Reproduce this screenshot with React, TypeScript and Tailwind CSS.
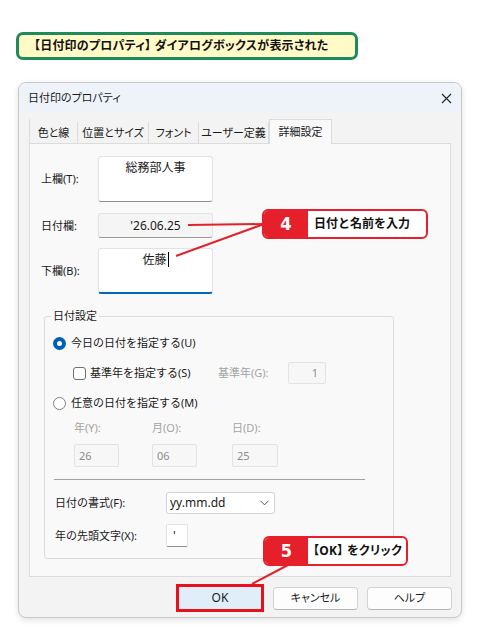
import React from "react";

function Radio({ checked }: { checked?: boolean }) {
  if (checked) {
    return (
      <span className="w-[13px] h-[13px] rounded-full bg-[#005fb8] flex items-center justify-center shrink-0">
        <span className="w-[5px] h-[5px] rounded-full bg-white" />
      </span>
    );
  }
  return <span className="w-[13px] h-[13px] rounded-full border border-[#808080] bg-white shrink-0" />;
}

function Tab({ label, w, active }: { label: string; w: string; active?: boolean }) {
  if (active) {
    return (
      <div
        className={`${w} h-[25px] -mb-px relative z-10 bg-[#f9f9f9] border border-b-0 border-[#dcdcdc] flex items-center justify-center text-[11px] leading-[14px] text-[#1a1a1a] [font-feature-settings:'palt']`}
      >
        {label}
      </div>
    );
  }
  return (
    <div
      className={`${w} h-[21px] border-r border-[#dcdcdc] flex items-center justify-center text-[11px] leading-[14px] text-[#1a1a1a] [font-feature-settings:'palt']`}
    >
      {label}
    </div>
  );
}

export default function App() {
  return (
    <div className="w-[480px] h-[640px] bg-white relative overflow-hidden pt-[32px] font-['Noto_Sans','Noto_Sans_CJK_JP',sans-serif] text-[#1a1a1a]">
      {/* Banner */}
      <div className="ml-[16px] w-[342px] h-[28px] border-[3px] border-[#1f8a5b] rounded-[7px] bg-[#fffac6] flex items-center pl-[15px] text-[12px] leading-[14px] font-bold text-[#111] whitespace-nowrap [font-feature-settings:'palt'] tracking-[0.2px]">
        【日付印のプロパティ】 ダイアログボックスが表示された
      </div>

      {/* Dialog */}
      <div className="mt-[22px] ml-[18px] w-[444px] h-[536px] rounded-[8px] border border-[#c9c9c9] bg-[#f3f3f3] shadow-[0_2px_6px_rgba(0,0,0,0.12)] flex flex-col overflow-hidden">
        {/* Title bar */}
        <div className="h-[30px] shrink-0 bg-[#eef3f9] flex items-center justify-between pl-[9px] pr-[9px]">
          <span className="text-[11px] leading-[14px] [font-feature-settings:'palt']">日付印のプロパティ</span>
          <svg width="11" height="11" viewBox="0 0 11 11">
            <path d="M1 1 L10 10 M10 1 L1 10" stroke="#222" strokeWidth="1.1" fill="none" />
          </svg>
        </div>

        {/* Tabs */}
        <div className="h-[30px] shrink-0 flex items-end px-[10px]">
          <div className="flex items-end border-l border-[#dcdcdc]">
            <Tab label="色と線" w="w-[48px]" />
            <Tab label="位置とサイズ" w="w-[71px]" />
            <Tab label="フォント" w="w-[50px]" />
            <Tab label="ユーザー定義" w="w-[70px]" />
            <Tab label="詳細設定" w="w-[63px]" active />
          </div>
        </div>

        {/* Panel */}
        <div className="mx-[10px] h-[434px] shrink-0 border border-[#dcdcdc] bg-[#f9f9f9] pt-[12px] text-[11px] leading-[14px]">
          {/* 上欄 */}
          <div className="flex items-center h-[46px]">
            <div className="w-[68px] pl-[11px]">上欄(T):</div>
            <div className="w-[115px] h-[46px] bg-white border border-[#e3e3e3] border-b-[#8f8f8f] rounded-[3px] flex justify-center pt-[4px] text-[12px] leading-[14px]">
              総務部人事
            </div>
          </div>
          {/* 日付欄 */}
          <div className="flex items-center h-[25px] mt-[11px]">
            <div className="w-[68px] pl-[11px]">日付欄:</div>
            <div className="w-[115px] h-[25px] bg-[#f5f5f5] border border-[#e3e3e3] border-b-[#9a9a9a] rounded-[3px] flex items-center justify-center text-[12px] leading-[14px]">
              '26.06.25
            </div>
          </div>
          {/* 下欄 */}
          <div className="flex items-center h-[46px] mt-[10px]">
            <div className="w-[68px] pl-[11px]">下欄(B):</div>
            <div className="w-[115px] h-[46px] bg-white border border-[#e3e3e3] border-b-2 border-b-[#0067c0] rounded-[3px] flex justify-center items-start pt-[3px] text-[12px] leading-[14px]">
              <span className="flex items-center">
                佐藤
                <span className="inline-block w-px h-[15px] bg-black ml-[1px]" />
              </span>
            </div>
          </div>

          {/* Group box */}
          <div className="mt-[22px] ml-[14px] w-[350px] border border-[#dcdcdc] rounded-[3px] pb-[11px]">
            <div className="-mt-[8px] ml-[6px] w-fit px-[2px] bg-[#f9f9f9] leading-[14px]">日付設定</div>

            <div className="mt-[12px] h-[16px] flex items-center pl-[8px] gap-[5px]">
              <Radio checked />
              <span>今日の日付を指定する(U)</span>
            </div>

            <div className="mt-[11px] h-[22px] flex items-center pl-[28px]">
              <span className="w-[145px] flex items-center gap-[4px]">
                <span className="w-[13px] h-[13px] rounded-[3px] border border-[#6f6f6f] bg-white shrink-0" />
                <span>基準年を指定する(S)</span>
              </span>
              <span className="w-[70px] text-[#a3a3a3]">基準年(G):</span>
              <span className="w-[38px] h-[22px] border border-[#e3e3e3] bg-[#f7f7f7] rounded-[2px] flex items-center justify-end pr-[7px] text-[#8c8c8c]">
                1
              </span>
            </div>

            <div className="mt-[11px] h-[16px] flex items-center pl-[8px] gap-[5px]">
              <Radio />
              <span>任意の日付を指定する(M)</span>
            </div>

            <div className="mt-[10px] h-[14px] flex pl-[29px] text-[#a3a3a3]">
              <span className="w-[78px]">年(Y):</span>
              <span className="w-[80px]">月(O):</span>
              <span>日(D):</span>
            </div>

            <div className="mt-[9px] flex pl-[29px] text-[#8c8c8c]">
              <div className="w-[78px]">
                <div className="w-[45px] h-[23px] border border-[#e3e3e3] bg-[#f7f7f7] rounded-[2px] flex items-center pl-[4px]">26</div>
              </div>
              <div className="w-[80px]">
                <div className="w-[45px] h-[23px] border border-[#e3e3e3] bg-[#f7f7f7] rounded-[2px] flex items-center pl-[4px]">06</div>
              </div>
              <div className="w-[46px] h-[23px] border border-[#e3e3e3] bg-[#f7f7f7] rounded-[2px] flex items-center pl-[4px]">25</div>
            </div>

            <div className="mt-[12px] ml-[9px] w-[311px] h-px bg-[#a0a0a0]" />

            <div className="mt-[12px] flex items-center pl-[10px]">
              <span className="w-[111px]">日付の書式(F):</span>
              <div className="w-[109px] h-[22px] bg-white border border-[#d3d3d3] rounded-[3px] flex items-center justify-between pl-[3px] pr-[5px] text-[12px]">
                <span>yy.mm.dd</span>
                <svg width="9" height="6" viewBox="0 0 9 6">
                  <path d="M0.5 0.8 L4.5 4.8 L8.5 0.8" stroke="#555" strokeWidth="1" fill="none" />
                </svg>
              </div>
            </div>

            <div className="mt-[10px] flex items-center pl-[10px]">
              <span className="w-[111px]">年の先頭文字(X):</span>
              <div className="w-[22px] h-[23px] bg-white border border-[#e3e3e3] border-b-[#8f8f8f] rounded-[2px] flex items-center pl-[6px] text-[12px]">
                '
              </div>
            </div>
          </div>
        </div>

        {/* Buttons */}
        <div className="mt-[7px] h-[28px] flex items-center justify-end gap-[9px] pr-[9px]">
          <div className="w-[88px] h-[28px] border-[3px] border-[#e8101a] bg-[#e0eefa] flex items-center justify-center text-[12px] leading-[14px]">
            OK
          </div>
          <div className="w-[85px] h-[23px] bg-[#fdfdfd] border border-[#d3d3d3] border-b-[#b5b5b5] rounded-[4px] flex items-center justify-center text-[11px] leading-[14px] [font-feature-settings:'palt']">
            キャンセル
          </div>
          <div className="w-[85px] h-[23px] bg-[#fdfdfd] border border-[#d3d3d3] border-b-[#b5b5b5] rounded-[4px] flex items-center justify-center text-[11px] leading-[14px] [font-feature-settings:'palt']">
            ヘルプ
          </div>
        </div>
      </div>

      {/* Red connector lines */}
      <svg className="absolute left-0 top-0 pointer-events-none z-20" width="480" height="640" viewBox="0 0 480 640">
        <path d="M188 225 L264 224" stroke="#e5202a" strokeWidth="2" fill="none" />
        <path d="M176 256 L264 224" stroke="#e5202a" strokeWidth="2" fill="none" />
        <path d="M288 565 L252 584" stroke="#e5202a" strokeWidth="2" fill="none" />
      </svg>

      {/* Callout 4 */}
      <div className="absolute left-[262px] top-[209px] w-[166px] h-[30px] z-30 rounded-[6px] border-2 border-[#e5202a] bg-white flex overflow-hidden">
        <div className="w-[44px] bg-[#e5202a] flex items-center justify-center text-white font-bold text-[18px] leading-none font-['DejaVu_Sans_Condensed','Roboto',sans-serif]">
          4
        </div>
        <div className="flex-1 flex items-center pl-[6px] text-[12px] leading-[14px] font-bold text-[#111] whitespace-nowrap">
          日付と名前を入力
        </div>
      </div>

      {/* Callout 5 */}
      <div className="absolute left-[263px] top-[536px] w-[145px] h-[30px] z-30 rounded-[6px] border-2 border-[#e5202a] bg-white flex overflow-hidden">
        <div className="w-[43px] bg-[#e5202a] flex items-center justify-center text-white font-bold text-[18px] leading-none font-['DejaVu_Sans_Condensed','Roboto',sans-serif]">
          5
        </div>
        <div className="flex-1 flex items-center pl-[5px] text-[12px] leading-[14px] font-bold text-[#111] whitespace-nowrap [font-feature-settings:'palt'] tracking-[0.3px]">
          【OK】 をクリック
        </div>
      </div>
    </div>
  );
}
